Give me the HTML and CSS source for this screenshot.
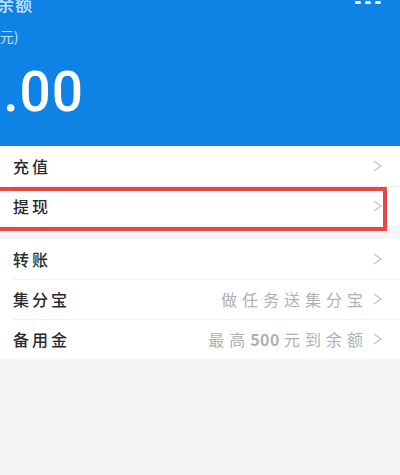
FILE: index.html
```html
<!DOCTYPE html>
<html lang="zh-CN">
<head>
<meta charset="utf-8">
<link rel="stylesheet" href="styles.css">
</head>
<body>
<div class="page">
  <header class="header">
    <div class="top">
      <span class="title">余额</span>
      <span class="more"><i></i><i></i><i></i></span>
    </div>
    <div class="unit">(元)</div>
    <div class="amount">0.00</div>
  </header>

  <section class="group">
    <div class="row"><span class="label">充值</span><span class="right"><svg class="chev" viewBox="0 0 9 12"><polyline points="1,1 8,6 1,11"/></svg></span></div>
    <div class="row"><span class="label">提现</span><span class="right"><svg class="chev" viewBox="0 0 9 12"><polyline points="1,1 8,6 1,11"/></svg></span>
      <div class="highlight"></div>
    </div>
  </section>

  <section class="group">
    <div class="row"><span class="label">转账</span><span class="right"><svg class="chev" viewBox="0 0 9 12"><polyline points="1,1 8,6 1,11"/></svg></span></div>
    <div class="row"><span class="label">集分宝</span><span class="right"><span class="hint">做任务送集分宝</span><svg class="chev" viewBox="0 0 9 12"><polyline points="1,1 8,6 1,11"/></svg></span></div>
    <div class="row"><span class="label">备用金</span><span class="right"><span class="hint">最高<span class="num">500</span>元到余额</span><svg class="chev" viewBox="0 0 9 12"><polyline points="1,1 8,6 1,11"/></svg></span></div>
  </section>
</div>
</body>
</html>
```
FILE: styles.css
```css
html, body {
  margin: 0;
  padding: 0;
  background: #f5f5f5;
  overflow: hidden;
}
body {
  width: 400px;
  height: 475px;
  font-family: "Noto Sans CJK SC", "Noto Sans", sans-serif;
}
.page {
  display: flex;
  flex-direction: column;
}
.header {
  background: #0f82e6;
  height: 146px;
  display: flex;
  flex-direction: column;
  color: #fff;
  overflow: hidden;
}
.top {
  display: flex;
  justify-content: space-between;
  align-items: flex-start;
  height: 16px;
  margin-top: -6px;
}
.title {
  font-size: 17px;
  line-height: 20px;
  margin-left: -3px;
  letter-spacing: 1px;
  font-weight: 500;
  color: rgba(255, 255, 255, 0.8);
}
.more {
  display: flex;
  gap: 4px;
  margin-top: 7px;
  margin-right: 19px;
}
.more i {
  display: block;
  width: 6px;
  height: 3px;
  border-radius: 1.5px;
  background: #fff;
}
.unit {
  font-size: 14px;
  line-height: 18px;
  margin-top: 17px;
  margin-left: -5px;
  color: rgba(255, 255, 255, 0.75);
}
.amount {
  font-family: "Roboto", "Liberation Sans", sans-serif;
  font-size: 55px;
  font-weight: 500;
  line-height: 60px;
  margin-top: 17px;
  margin-left: -29px;
  letter-spacing: 1px;
}
.group {
  background: #fff;
  margin-bottom: 13px;
}
.row {
  position: relative;
  height: 40px;
  display: flex;
  align-items: center;
  justify-content: space-between;
  padding: 0 18px 0 13px;
}
.row + .row::before {
  content: "";
  position: absolute;
  left: 13px;
  right: 0;
  top: 0;
  height: 1px;
  background: #efefef;
}
.label {
  font-size: 16px;
  letter-spacing: 3px;
  font-weight: 500;
  color: #2a2a2a;
}
.right {
  display: flex;
  align-items: center;
  gap: 10px;
}
.hint {
  font-size: 16px;
  letter-spacing: 5px;
  margin-right: -5px;
  color: #b0b0b0;
}
.num {
  font-weight: 700;
  letter-spacing: 0.5px;
  margin-right: 4px;
}
.chev {
  width: 9px;
  height: 12px;
  fill: none;
  stroke: #c4c4c4;
  stroke-width: 1.3;
}
.highlight {
  position: absolute;
  left: -10px;
  top: 1px;
  width: 389px;
  height: 36px;
  border: 4px solid #e84545;
  pointer-events: none;
}
```
